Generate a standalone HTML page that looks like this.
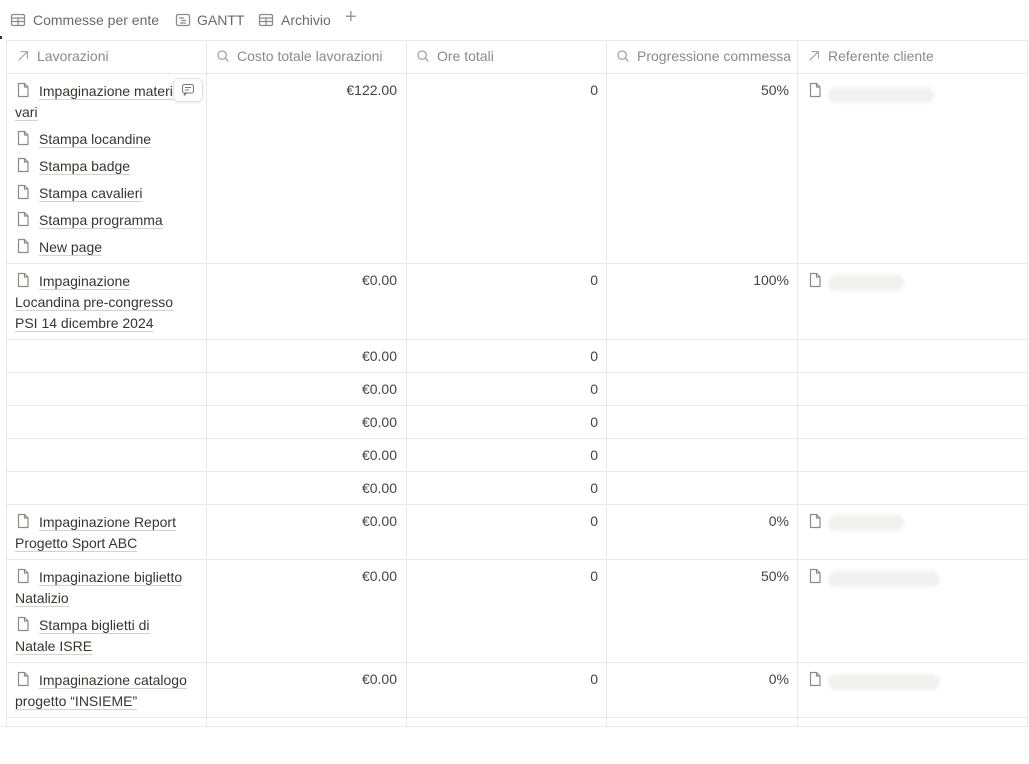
<!DOCTYPE html>
<html><head><meta charset="utf-8"><style>
body{margin:0;width:1029px;height:764px;background:#fff;font-family:"Liberation Sans",sans-serif;color:#37352f;position:relative;overflow:hidden}
.a{position:absolute;white-space:nowrap;font-size:14px;line-height:20px}
.h{position:absolute;background:#e9e9e7;height:1px}
.v{position:absolute;background:#e9e9e7;width:1px;top:40px;height:686px}
.hd{color:#8b8a86}
.u{border-bottom:1px solid #d3d2cf}
.r{text-align:right;color:#444}
svg{position:absolute}
.blur{position:absolute;height:16px;border-radius:8px;background:#f1f1f0;filter:blur(1.5px)}
</style></head><body>
<svg width="0" height="0" style="position:absolute"><defs>
<symbol id="pg" viewBox="0 0 16 16"><path d="M3.5 1.5h6l3.5 3.5v9.5h-9.5z M9.5 1.5v3.5h3.5" fill="none" stroke="#8b8a86" stroke-width="1.2" stroke-linejoin="round"/></symbol>
<symbol id="tb" viewBox="0 0 16 16"><rect x="1.5" y="2.5" width="13" height="11" rx="1.5" fill="none" stroke="#8b8a86" stroke-width="1.3"/><path d="M1.5 6h13M1.5 9.5h13M8 6v7.5" stroke="#8b8a86" stroke-width="1.3"/></symbol>
<symbol id="sr" viewBox="0 0 16 16"><circle cx="7" cy="7" r="4.8" fill="none" stroke="#9b9a97" stroke-width="1.3"/><path d="M10.5 10.5l3.5 3.5" stroke="#9b9a97" stroke-width="1.3"/></symbol>
<symbol id="ar" viewBox="0 0 16 16"><path d="M3 13L13 3M5 3h8v8" fill="none" stroke="#9b9a97" stroke-width="1.2"/></symbol>
</defs></svg>

<svg style="left:10px;top:12px" width="16" height="16"><use href="#tb"/></svg>
<div class="a" style="left:33px;top:10px;color:#6b6a66">Commesse per ente</div>
<svg style="left:175px;top:12px" width="16" height="16" viewBox="0 0 16 16"><rect x="1.5" y="2.5" width="13" height="11" rx="1.5" fill="none" stroke="#8b8a86" stroke-width="1.3"/><path d="M4 6h5M6 8.5h5M5 11h6" stroke="#8b8a86" stroke-width="1.2"/></svg>
<div class="a" style="left:197px;top:10px;color:#6b6a66">GANTT</div>
<svg style="left:258px;top:12px" width="16" height="16"><use href="#tb"/></svg>
<div class="a" style="left:281px;top:10px;color:#6b6a66">Archivio</div>
<div class="a" style="left:345px;top:7px;color:#9b9a97;font-size:20px">+</div>
<div style="position:absolute;left:0;top:36px;width:2px;height:3px;background:#333"></div>

<div class="h" style="left:6px;top:40px;width:1021px"></div>
<div class="h" style="left:6px;top:73px;width:1021px"></div>
<div class="h" style="left:6px;top:263px;width:1021px"></div>
<div class="h" style="left:6px;top:339px;width:1021px"></div>
<div class="h" style="left:6px;top:372px;width:1021px"></div>
<div class="h" style="left:6px;top:405px;width:1021px"></div>
<div class="h" style="left:6px;top:438px;width:1021px"></div>
<div class="h" style="left:6px;top:471px;width:1021px"></div>
<div class="h" style="left:6px;top:504px;width:1021px"></div>
<div class="h" style="left:6px;top:559px;width:1021px"></div>
<div class="h" style="left:6px;top:662px;width:1021px"></div>
<div class="h" style="left:6px;top:717px;width:1021px"></div>
<div class="h" style="left:0;top:726px;width:1029px"></div>
<div class="v" style="left:6px"></div><div class="v" style="left:206px"></div><div class="v" style="left:406px"></div><div class="v" style="left:606px"></div><div class="v" style="left:797px"></div><div class="v" style="left:1027px"></div>

<svg style="left:16px;top:49px" width="14" height="14"><use href="#ar"/></svg><div class="a hd" style="left:37px;top:46px">Lavorazioni</div>
<svg style="left:216px;top:49px" width="14" height="14"><use href="#sr"/></svg><div class="a hd" style="left:237px;top:46px">Costo totale lavorazioni</div>
<svg style="left:416px;top:49px" width="14" height="14"><use href="#sr"/></svg><div class="a hd" style="left:437px;top:46px">Ore totali</div>
<svg style="left:616px;top:49px" width="14" height="14"><use href="#sr"/></svg><div class="a hd" style="left:637px;top:46px">Progressione commessa</div>
<svg style="left:807px;top:49px" width="14" height="14"><use href="#ar"/></svg><div class="a hd" style="left:828px;top:46px">Referente cliente</div>

<!-- row1 -->
<svg style="left:15px;top:82px" width="16" height="16"><use href="#pg"/></svg><div class="a" style="left:39px;top:81px"><span class="u">Impaginazione materi</span></div>
<div style="position:absolute;left:173px;top:78px;width:28px;height:22px;border:1px solid #e3e2e0;border-radius:6px;background:#fff;box-shadow:0 1px 2px rgba(0,0,0,.08)"><svg style="left:7px;top:4px" width="14" height="14" viewBox="0 0 14 14"><rect x="1.5" y="1.5" width="11" height="8.5" rx="2" fill="none" stroke="#777" stroke-width="1.1"/><path d="M4 10l-1 2.5 3-2.5M4 4.5h6M4 7h4" fill="none" stroke="#777" stroke-width="1.1"/></svg></div>
<div class="a" style="left:15px;top:102px"><span class="u">vari</span></div>
<svg style="left:15px;top:130px" width="16" height="16"><use href="#pg"/></svg><div class="a" style="left:39px;top:129px"><span class="u">Stampa locandine</span></div>
<svg style="left:15px;top:157px" width="16" height="16"><use href="#pg"/></svg><div class="a" style="left:39px;top:156px"><span class="u">Stampa badge</span></div>
<svg style="left:15px;top:184px" width="16" height="16"><use href="#pg"/></svg><div class="a" style="left:39px;top:183px"><span class="u">Stampa cavalieri</span></div>
<svg style="left:15px;top:211px" width="16" height="16"><use href="#pg"/></svg><div class="a" style="left:39px;top:210px"><span class="u">Stampa programma</span></div>
<svg style="left:15px;top:238px" width="16" height="16"><use href="#pg"/></svg><div class="a" style="left:39px;top:237px"><span class="u">New page</span></div>
<div class="a r" style="right:632px;top:80px">€122.00</div>
<div class="a r" style="right:431px;top:80px">0</div>
<div class="a r" style="right:240px;top:80px">50%</div>
<svg style="left:807px;top:82px" width="16" height="16"><use href="#pg"/></svg><div class="blur" style="left:828px;top:87px;width:106px"></div>

<!-- row2 -->
<svg style="left:15px;top:272px" width="16" height="16"><use href="#pg"/></svg><div class="a" style="left:39px;top:271px"><span class="u">Impaginazione</span></div>
<div class="a" style="left:15px;top:292px"><span class="u">Locandina pre-congresso</span></div>
<div class="a" style="left:15px;top:313px"><span class="u">PSI 14 dicembre 2024</span></div>
<div class="a r" style="right:632px;top:270px">€0.00</div>
<div class="a r" style="right:431px;top:270px">0</div>
<div class="a r" style="right:240px;top:270px">100%</div>
<svg style="left:807px;top:272px" width="16" height="16"><use href="#pg"/></svg><div class="blur" style="left:828px;top:275px;width:76px"></div>

<div class="a r" style="right:632px;top:346px">€0.00</div><div class="a r" style="right:431px;top:346px">0</div>
<div class="a r" style="right:632px;top:379px">€0.00</div><div class="a r" style="right:431px;top:379px">0</div>
<div class="a r" style="right:632px;top:412px">€0.00</div><div class="a r" style="right:431px;top:412px">0</div>
<div class="a r" style="right:632px;top:445px">€0.00</div><div class="a r" style="right:431px;top:445px">0</div>
<div class="a r" style="right:632px;top:478px">€0.00</div><div class="a r" style="right:431px;top:478px">0</div>

<!-- row -->
<svg style="left:15px;top:513px" width="16" height="16"><use href="#pg"/></svg><div class="a" style="left:39px;top:512px"><span class="u">Impaginazione Report</span></div>
<div class="a" style="left:15px;top:533px"><span class="u">Progetto Sport ABC</span></div>
<div class="a r" style="right:632px;top:511px">€0.00</div><div class="a r" style="right:431px;top:511px">0</div><div class="a r" style="right:240px;top:511px">0%</div>
<svg style="left:807px;top:513px" width="16" height="16"><use href="#pg"/></svg><div class="blur" style="left:828px;top:515px;width:76px"></div>

<svg style="left:15px;top:568px" width="16" height="16"><use href="#pg"/></svg><div class="a" style="left:39px;top:567px"><span class="u">Impaginazione biglietto</span></div>
<div class="a" style="left:15px;top:588px"><span class="u">Natalizio</span></div>
<svg style="left:15px;top:616px" width="16" height="16"><use href="#pg"/></svg><div class="a" style="left:39px;top:615px"><span class="u">Stampa biglietti di</span></div>
<div class="a" style="left:15px;top:636px"><span class="u">Natale ISRE</span></div>
<div class="a r" style="right:632px;top:566px">€0.00</div><div class="a r" style="right:431px;top:566px">0</div><div class="a r" style="right:240px;top:566px">50%</div>
<svg style="left:807px;top:568px" width="16" height="16"><use href="#pg"/></svg><div class="blur" style="left:828px;top:571px;width:112px"></div>

<svg style="left:15px;top:671px" width="16" height="16"><use href="#pg"/></svg><div class="a" style="left:39px;top:670px"><span class="u">Impaginazione catalogo</span></div>
<div class="a" style="left:15px;top:691px"><span class="u">progetto “INSIEME”</span></div>
<div class="a r" style="right:632px;top:669px">€0.00</div><div class="a r" style="right:431px;top:669px">0</div><div class="a r" style="right:240px;top:669px">0%</div>
<svg style="left:807px;top:671px" width="16" height="16"><use href="#pg"/></svg><div class="blur" style="left:828px;top:674px;width:112px"></div>
</body></html>
